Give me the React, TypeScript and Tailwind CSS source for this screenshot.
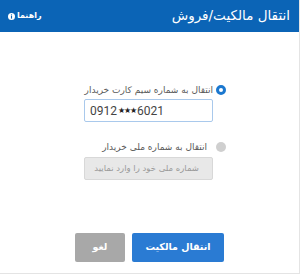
export default function App() {
  return (
    <div
      dir="rtl"
      className="w-[300px] h-[274px] bg-white flex flex-col border-r border-b border-[#e4e4e4] font-['DejaVu_Sans',sans-serif]"
    >
      {/* header */}
      <div className="h-[32px] bg-[#0b64b6] flex items-center justify-between pr-[9px] pl-[8px] text-white">
        <div className="text-[13.5px] leading-none">انتقال مالکیت/فروش</div>
        <div className="flex items-center gap-[2px] text-[8px] font-bold leading-none">
          <span>راهنما</span>
          <svg width="7" height="7" viewBox="0 0 10 10">
            <circle cx="5" cy="5" r="5" fill="#ffffff" />
            <rect x="4.2" y="4.2" width="1.6" height="3.8" fill="#0b64b6" />
            <circle cx="5" cy="2.7" r="0.9" fill="#0b64b6" />
          </svg>
        </div>
      </div>

      {/* body */}
      <div className="flex flex-col pt-[52px] pr-[73px]">
        <div className="flex items-center h-[12px]">
          <span className="w-[10px] h-[10px] rounded-full border-[3px] border-[#1b78cf] bg-white shrink-0" />
          <span className="mr-[3px] text-[9px] leading-none text-[#5a5a5a]">انتقال به شماره سیم کارت خریدار</span>
        </div>
        <div
          dir="ltr"
          className="mt-[3px] mr-[13px] self-start w-[129px] h-[23px] border border-[#a9c9ec] rounded-[2px] flex items-center pl-[5px] text-[12px] text-[#444] font-['Roboto',sans-serif]"
        >
          0912<span className="text-[8px] mx-[1px] tracking-[-1px] text-[#222]">★★★</span>6021
        </div>

        <div className="flex items-center h-[12px] mt-[19px]">
          <span className="w-[10px] h-[10px] rounded-full bg-[#cfcfcf] shrink-0" />
          <span className="mr-[9px] text-[9px] leading-none text-[#5a5a5a]">انتقال به شماره ملی خریدار</span>
        </div>
        <div className="mt-[4px] mr-[13px] self-start w-[129px] h-[23px] border border-[#d8d8d8] bg-[#e8e8e8] rounded-[2px] flex items-center pr-[13px] text-[8.5px] text-[#9a9a9a]">
          شماره ملی خود را وارد نمایید
        </div>
      </div>

      {/* actions */}
      <div className="flex justify-center gap-[7px] mt-[53px]">
        <button className="w-[92px] h-[29px] rounded-[2px] bg-[#2a7bd3] text-white text-[9.5px] font-bold">
          انتقال مالکیت
        </button>
        <button className="w-[50px] h-[29px] rounded-[2px] bg-[#a8a8a8] text-white text-[9.5px] font-bold">
          لغو
        </button>
      </div>
    </div>
  )
}
